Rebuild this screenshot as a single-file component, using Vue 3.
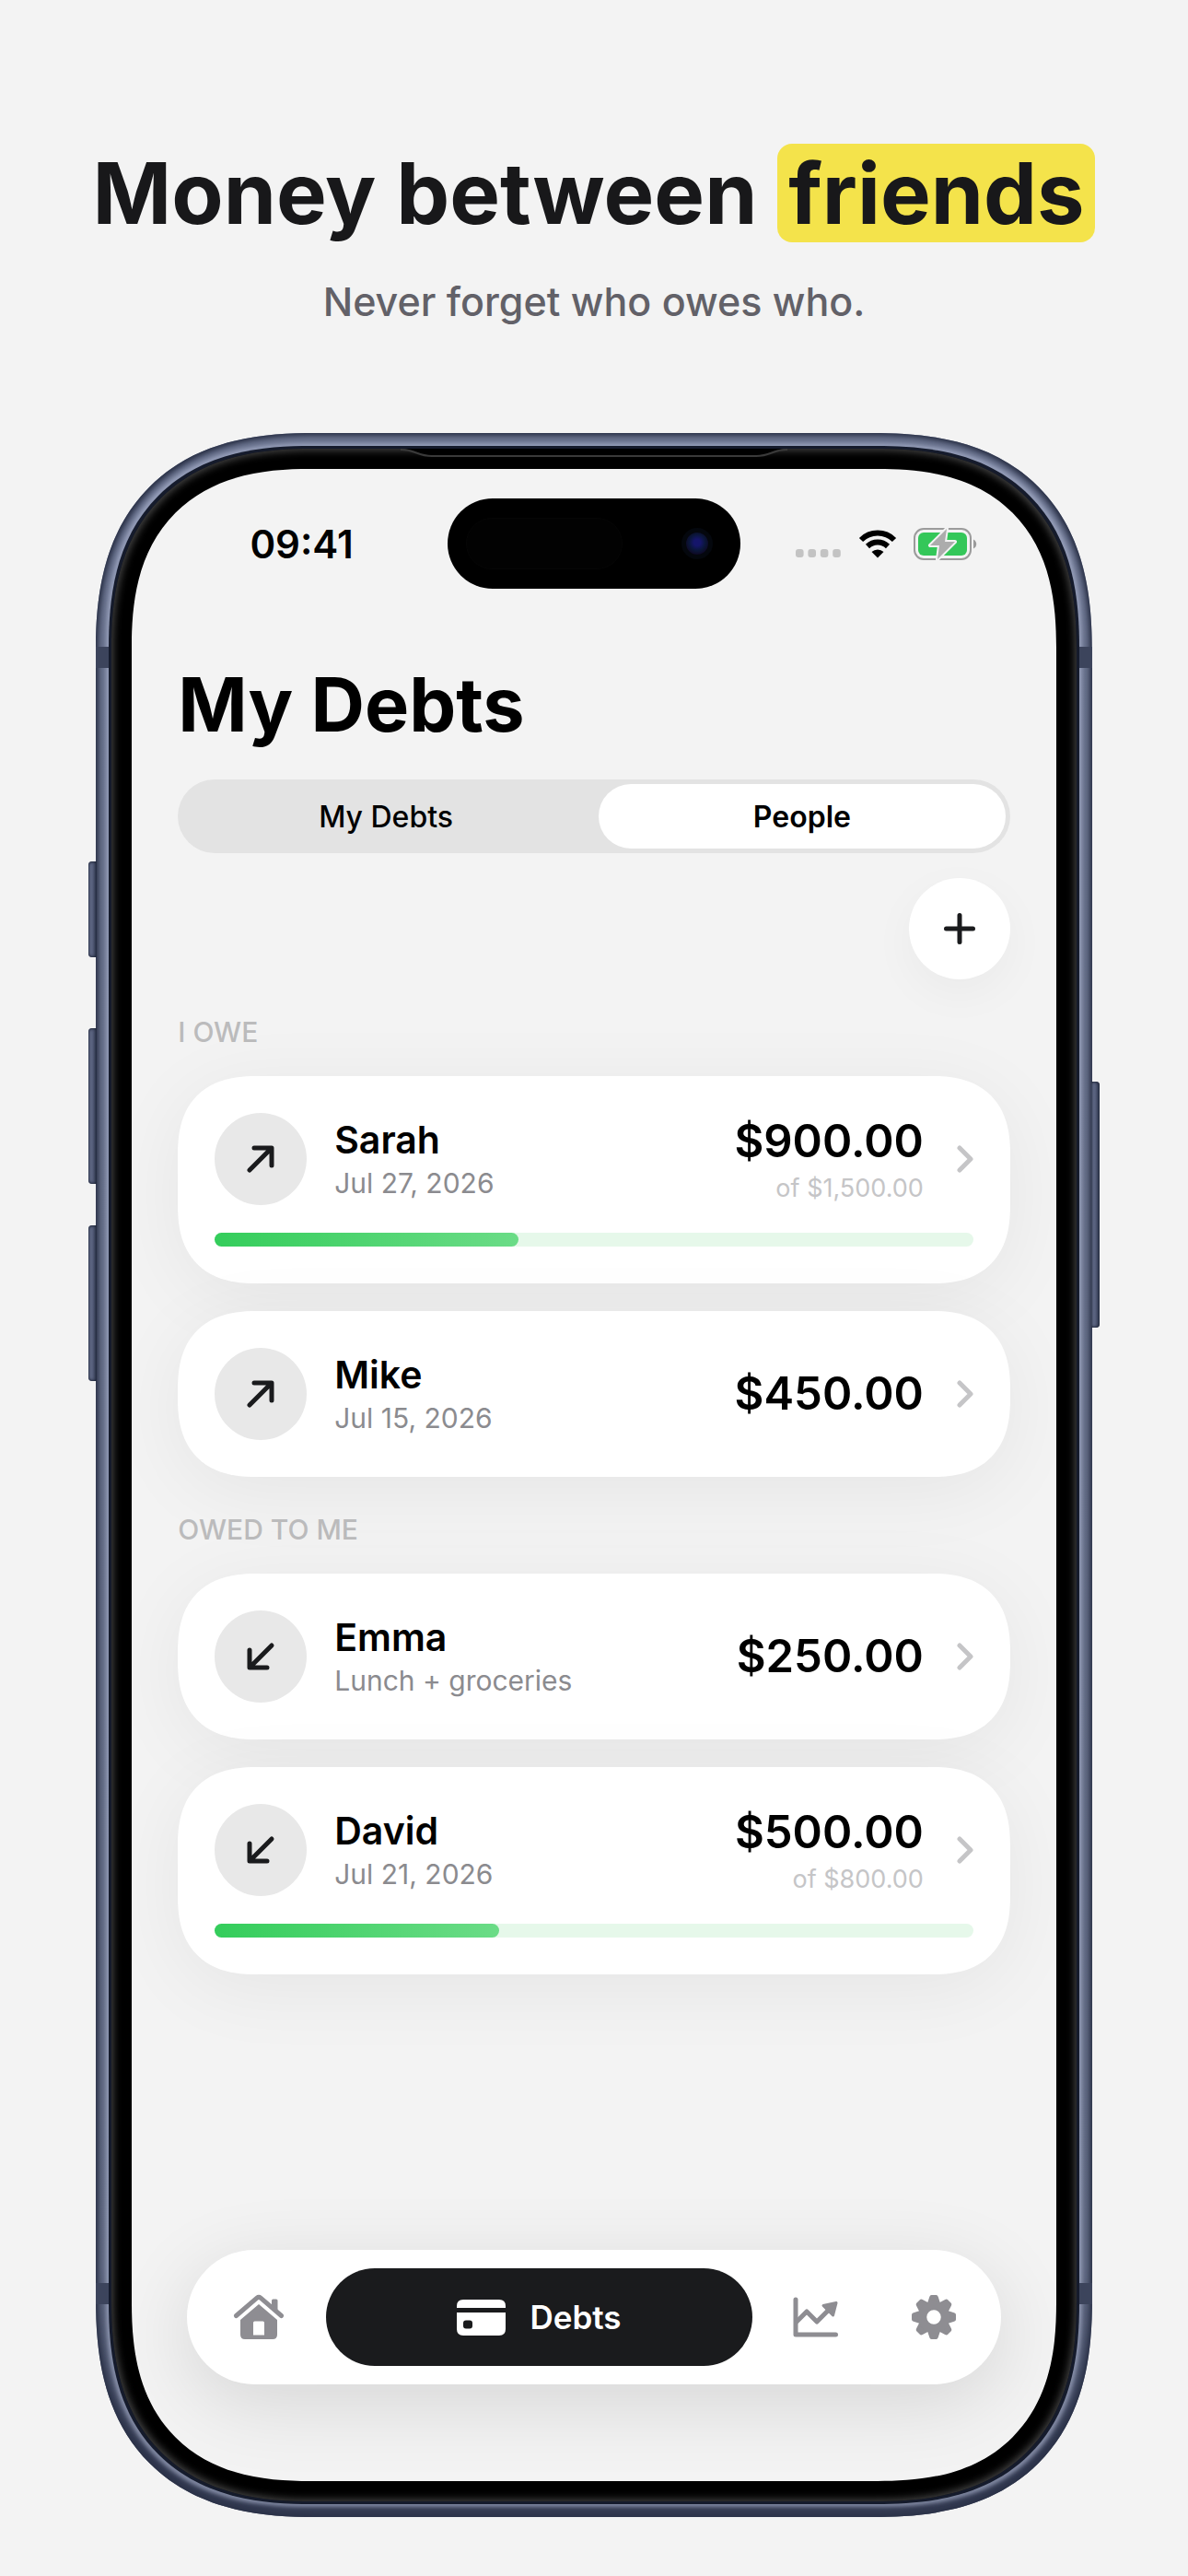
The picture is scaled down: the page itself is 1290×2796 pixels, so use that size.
<script setup>
import { ref } from 'vue'

const tabs = ['My Debts', 'People']
const activeTab = ref('People')

const sections = [
    {
        title: 'I OWE',
        direction: 'out',
        debts: [
            { name: 'Sarah', note: 'Jul 27, 2026', amount: '$900.00', total: '$1,500.00', paid: 40 },
            { name: 'Mike', note: 'Jul 15, 2026', amount: '$450.00' }
        ]
    },
    {
        title: 'OWED TO ME',
        direction: 'in',
        debts: [
            { name: 'Emma', note: 'Lunch + groceries', amount: '$250.00' },
            { name: 'David', note: 'Jul 21, 2026', amount: '$500.00', total: '$800.00', paid: 37.5 }
        ]
    }
]
</script>

<template>
    <main class="page">
        <h1 class="headline">Money between <mark>friends</mark></h1>
        <p class="tagline">Never forget who owes who.</p>

        <div class="phone">
            <span class="side-key key-action"></span>
            <span class="side-key key-up"></span>
            <span class="side-key key-down"></span>
            <span class="side-key key-power"></span>
            <span class="antenna antenna-top"></span>
            <span class="antenna antenna-bottom"></span>

            <div class="bezel">
                <svg class="speaker" viewBox="0 0 420 12" aria-hidden="true">
                    <path d="M0 0C16 0 18 7 34 7H386C402 7 404 0 420 0Z" fill="#000" />
                    <path d="M0 1C16 1 18 8 34 8H386C402 8 404 1 420 1" fill="none" stroke="#3a3a3a" stroke-width="2" />
                </svg>

                <div class="screen">
                    <header class="status-bar">
                        <span class="time">09:41</span>
                        <span class="island"><span class="sensor"></span><span class="lens"></span></span>
                        <span class="indicators">
                            <svg width="50" height="12" viewBox="0 0 50 12" class="signal" aria-hidden="true">
                                <rect v-for="i in 4" :key="i" :x="(i - 1) * 13.4" width="8.6" height="9" rx="3" fill="#c3c3c3" />
                            </svg>
                            <svg width="42" height="32" viewBox="0 0 42 32" aria-hidden="true">
                                <path d="M3 12A25.500 25.500 0 0 1 39 12" fill="none" stroke="#000" stroke-width="6" />
                                <path d="M10 19A16 16 0 0 1 32 19" fill="none" stroke="#000" stroke-width="6" />
                                <path d="M14.500 25A9.500 9.500 0 0 1 27.500 25L21 31.500Z" fill="#000" />
                            </svg>
                            <svg width="69" height="36" viewBox="0 0 69 36" aria-hidden="true">
                                <rect x="1" y="2" width="61" height="33" rx="10" fill="none" stroke="#9b9b9b" stroke-width="2" />
                                <rect x="5" y="6" width="53" height="25" rx="6" fill="#34c759" />
                                <path d="M65 13.500C69.300 15.500 69.300 21.500 65 23.500Z" fill="#9b9b9b" />
                                <path d="M36 2L18 20H28L26 35L45 16H34Z" fill="#acacac" stroke="#f3f3f3" stroke-width="4" stroke-linejoin="round" paint-order="stroke" />
                            </svg>
                        </span>
                    </header>

                    <h2 class="title">My Debts</h2>

                    <div class="segments">
                        <button v-for="tab in tabs" :key="tab" type="button" :class="{ active: tab === activeTab }"
                            @click="activeTab = tab">{{ tab }}</button>
                    </div>

                    <button class="add" type="button" aria-label="Add debt">
                        <svg width="36" height="36" viewBox="0 0 36 36">
                            <path d="M18 3.500V32.500M3.500 18H32.500" stroke="#1a1b1d" stroke-width="5" stroke-linecap="round" />
                        </svg>
                    </button>

                    <section v-for="section in sections" :key="section.title" class="group">
                        <h3>{{ section.title }}</h3>
                        <a v-for="debt in section.debts" :key="debt.name" class="card" href="#">
                            <span class="row">
                                <span class="direction">
                                    <svg width="36" height="36" viewBox="0 0 36 36" aria-hidden="true">
                                        <path v-if="section.direction === 'out'" d="M6 30L29.500 6.500M11 6H30V25" />
                                        <path v-else d="M30 6L6.500 29.500M6 11V30H25" />
                                    </svg>
                                </span>
                                <span class="who">
                                    <span class="name">{{ debt.name }}</span>
                                    <span class="note">{{ debt.note }}</span>
                                </span>
                                <span class="sum">
                                    <span class="amount">{{ debt.amount }}</span>
                                    <span v-if="debt.total" class="total">of {{ debt.total }}</span>
                                </span>
                                <svg class="chevron" width="18" height="30" viewBox="0 0 18 30" aria-hidden="true">
                                    <path d="M3 3L15 15L3 27" />
                                </svg>
                            </span>
                            <span v-if="debt.paid" class="track">
                                <span class="fill" :style="{ width: debt.paid + '%' }"></span>
                            </span>
                        </a>
                    </section>

                    <nav class="tab-bar">
                        <a href="#" class="tab" aria-label="Home">
                            <svg width="56" height="50" viewBox="0 0 56 50">
                                <path d="M3.500 23.500L26 4.200Q28 2.600 30 4.200L52.500 23.500" fill="none" stroke="#8e8d92" stroke-width="5" stroke-linecap="round" />
                                <path d="M42 13V7Q42 5.500 43.500 5.500H47Q48.500 5.500 48.500 7V20Z" fill="#8e8d92" />
                                <path fill-rule="evenodd" d="M28 11L48 28V44Q48 49 43 49H13Q8 49 8 44V28ZM23.500 29.500Q22 29.500 22 31V44.500H34V31Q34 29.500 32.500 29.500Z" fill="#8e8d92" />
                            </svg>
                        </a>
                        <a href="#" class="tab current">
                            <svg width="53" height="39" viewBox="0 0 53 39" aria-hidden="true">
                                <path d="M0 9V7Q0 0 7 0H46Q53 0 53 7V9Z" fill="#fff" />
                                <path fill-rule="evenodd" d="M0 14H53V32Q53 39 46 39H7Q0 39 0 32ZM10 22.500Q7 22.500 7 25.500V28.500Q7 31.500 10 31.500H14Q17 31.500 17 28.500V25.500Q17 22.500 14 22.500Z" fill="#fff" />
                            </svg>
                            Debts
                        </a>
                        <a href="#" class="tab" aria-label="Statistics">
                            <svg width="50" height="44" viewBox="0 0 50 44" fill="none" stroke="#8e8d92" stroke-width="5" stroke-linecap="round" stroke-linejoin="round">
                                <path d="M3 3V41H46.500" />
                                <path d="M4 27L15 16L26 27L39 14" />
                                <path d="M33 9.500L47 6.500L43.500 20Z" fill="#8e8d92" stroke-width="3" />
                            </svg>
                        </a>
                        <a href="#" class="tab" aria-label="Settings">
                            <svg width="48" height="48" viewBox="-24 -24 48 48" fill="#8e8d92">
                                <path v-for="i in 8" :key="i" :transform="`rotate(${i * 45})`" d="M-7 -15L-4.700 -22Q-4.200 -24 -2.500 -24H2.500Q4.200 -24 4.700 -22L7 -15Z" />
                                <circle r="12.500" fill="none" stroke="#8e8d92" stroke-width="9.500" />
                            </svg>
                        </a>
                    </nav>
                </div>
            </div>
        </div>
    </main>
</template>

<style>
body {
    margin: 0;
    background: #f3f3f3;
}
</style>

<style scoped>
* {
    box-sizing: border-box;
}

.page {
    min-height: 100vh;
    padding: 156px 0 62px;
    background: #f3f3f3;
    color: #000;
    font-family: Inter, "Liberation Sans", sans-serif;
    text-align: center;
}

.headline {
    margin: 0;
    color: #18181a;
    font-size: 92px;
    font-weight: 700;
    line-height: 107px;
    white-space: nowrap;
}

.headline mark {
    display: inline-block;
    padding: 0 12px;
    border-radius: 16px;
    background: #f4e34b;
    color: inherit;
}

.tagline {
    margin: 37px 0 116px;
    color: #626168;
    font-size: 43px;
    font-weight: 500;
    line-height: 54px;
}

/* device */
.phone {
    position: relative;
    display: flex;
    width: calc(84% - 2px);
    aspect-ratio: 1082 / 2263;
    margin: 0 auto;
    padding: 17px;
    border-radius: 196px;
    background: linear-gradient(#68718c 0%, #5f6881 88%, #343b52 97%);
    box-shadow: inset 0 0 5px 3px #2b3248;
}

.bezel {
    position: relative;
    display: flex;
    flex: 1;
    padding: 22px;
    border-radius: 179px;
    background: #000;
    box-shadow: 0 0 0 3px #151b2c, 0 0 4px 6px rgba(178, 186, 214, 0.6), inset 0 0 8px 2px #454545;
}

.speaker {
    position: absolute;
    top: 0;
    left: 50%;
    width: 420px;
    height: 12px;
    transform: translateX(-50%);
}

.side-key {
    position: absolute;
    left: -8px;
    width: 9px;
    border-radius: 4px 0 0 4px;
    background: linear-gradient(90deg, #7680a0, #343c54);
    box-shadow: inset 0 0 3px 1px #20273a;
}

.key-action {
    top: 465px;
    height: 104px;
}

.key-up {
    top: 646px;
    height: 169px;
}

.key-down {
    top: 860px;
    height: 169px;
}

.key-power {
    top: 704px;
    right: -8px;
    left: auto;
    height: 267px;
    border-radius: 0 4px 4px 0;
}

.antenna {
    position: absolute;
    z-index: 1;
    right: 0;
    left: 0;
    height: 23px;
    background: linear-gradient(90deg, #3c445c 14px, transparent 14px calc(100% - 14px), #3c445c calc(100% - 14px));
}

.antenna-top {
    top: 232px;
}

.antenna-bottom {
    bottom: 231px;
}

.screen {
    display: flex;
    flex: 1;
    flex-direction: column;
    min-width: 0;
    padding: 32px 50px 105px;
    border-radius: 156px;
    background: #f3f3f3;
}

/* status bar */
.status-bar {
    display: grid;
    grid-template-columns: 1fr 318px 1fr;
    align-items: center;
    margin: 0 -24px;
}

.time {
    font-size: 42px;
    font-weight: 600;
}

.island {
    display: flex;
    align-items: center;
    justify-content: space-between;
    height: 98px;
    padding: 0 30px 0 20px;
    border-radius: 49px;
    background: #000;
}

.sensor {
    width: 170px;
    height: 56px;
    border: 1px solid #060606;
    border-radius: 28px;
    background: #020202;
}

.lens {
    width: 34px;
    height: 34px;
    border: 5px solid #04070d;
    border-radius: 50%;
    background: radial-gradient(circle at 50% 45%, #15156a 0 20%, #0a1638 50%, #100520 80%);
}

.indicators {
    display: flex;
    align-items: center;
    justify-content: center;
    gap: 18px;
}

.signal {
    align-self: flex-end;
}

/* content */
.title {
    margin: 76px 0 31px;
    font-size: 81px;
    font-weight: 700;
    line-height: 100px;
    text-align: left;
}

button {
    border: 0;
    color: inherit;
    font-family: inherit;
    cursor: pointer;
}

.segments {
    display: grid;
    grid-template-columns: 1fr 1fr;
    gap: 10px;
    height: 80px;
    padding: 5px;
    border-radius: 40px;
    background: #e3e3e3;
}

.segments button {
    border-radius: 35px;
    background: transparent;
    font-size: 32px;
    font-weight: 500;
}

.segments .active {
    background: #fff;
    font-weight: 600;
}

.add {
    display: grid;
    place-items: center;
    align-self: flex-end;
    width: 110px;
    height: 110px;
    margin-top: 27px;
    padding: 0;
    border-radius: 50%;
    background: #fff;
    box-shadow: 0 15px 50px rgba(0, 0, 0, 0.04);
}

.group {
    display: flex;
    flex-direction: column;
    gap: 30px;
    margin-top: 39px;
}

.group h3 {
    margin: 0;
    color: #bbbbbc;
    font-size: 30px;
    font-weight: 500;
    line-height: 36px;
    text-align: left;
}

.card {
    display: flex;
    flex-direction: column;
    gap: 30px;
    padding: 40px;
    border-radius: 72px;
    background: #fff;
    box-shadow: 0 15px 85px rgba(0, 0, 0, 0.06);
    color: inherit;
    text-decoration: none;
}

.row {
    display: flex;
    align-items: center;
    height: 100px;
}

.direction {
    display: grid;
    place-items: center;
    width: 100px;
    height: 100px;
    border-radius: 50%;
    background: #e8e8e8;
}

.direction path {
    fill: none;
    stroke: #1a1b1d;
    stroke-width: 5;
    stroke-linecap: round;
    stroke-linejoin: round;
}

.who {
    display: flex;
    flex: 1;
    flex-direction: column;
    gap: 4px;
    margin-left: 30px;
    text-align: left;
}

.name {
    font-size: 41px;
    font-weight: 600;
    line-height: 48px;
}

.note {
    color: #8b8b8f;
    font-size: 30px;
    line-height: 38px;
}

.sum {
    display: flex;
    flex-direction: column;
    gap: 5px;
    text-align: right;
}

.amount {
    font-size: 49px;
    font-weight: 600;
    line-height: 58px;
}

.total {
    color: #c5c5c7;
    font-size: 27px;
    line-height: 34px;
}

.chevron {
    margin-left: 36px;
}

.chevron path {
    fill: none;
    stroke: #c5c5c7;
    stroke-width: 5;
    stroke-linecap: round;
    stroke-linejoin: round;
}

.track {
    height: 15px;
    border-radius: 8px;
    background: #e6f8ea;
}

.fill {
    display: block;
    height: 15px;
    border-radius: 8px;
    background: linear-gradient(90deg, #34cd5b, #6bdc87);
}

/* bottom navigation */
.tab-bar {
    display: flex;
    align-items: stretch;
    height: 146px;
    margin: auto 10px 0;
    padding: 20px 9px 20px 14px;
    border-radius: 73px;
    background: #fff;
    box-shadow: 0 20px 85px rgba(0, 0, 0, 0.12);
}

.tab {
    display: flex;
    align-items: center;
    justify-content: center;
    width: 128px;
}

.current {
    flex: 1;
    gap: 26px;
    margin: 0 5px 0 9px;
    border-radius: 53px;
    background: #1a1b1d;
    color: #fff;
    font-size: 35px;
    font-weight: 600;
    text-decoration: none;
}

/* continuous corners where the browser knows them */
@supports (corner-shape: superellipse(1.3)) {
    .phone,
    .bezel,
    .screen,
    .card {
        corner-shape: superellipse(1.3);
    }

    .phone {
        border-radius: 238px;
    }

    .bezel {
        border-radius: 219px;
    }

    .screen {
        border-radius: 194px;
    }

    .card {
        border-radius: 86px;
    }
}
</style>
